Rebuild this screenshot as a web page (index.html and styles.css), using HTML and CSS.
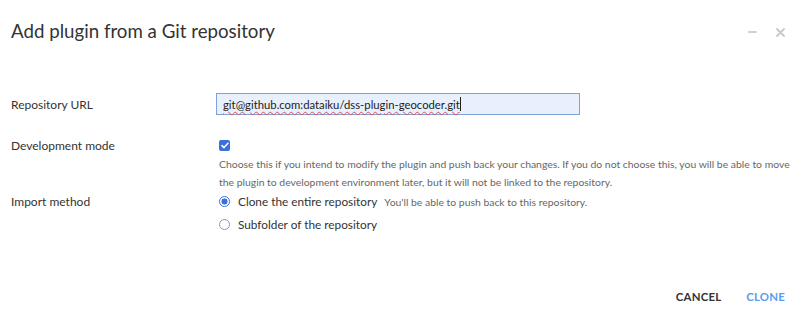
FILE: index.html
```html
<!DOCTYPE html>
<html>
<head>
<meta charset="utf-8">
<link rel="stylesheet" href="styles.css">
</head>
<body>
<div class="modal">
  <div class="header">
    <h1 class="title">Add plugin from a Git repository</h1>
    <div class="controls">
      <span class="ctl-min"></span>
      <svg class="ctl-close" width="9" height="9" viewBox="0 0 9 9"><path d="M1 1L8 8M8 1L1 8" stroke="#c8c8c8" stroke-width="1.8" stroke-linecap="round"/></svg>
    </div>
  </div>
  <div class="form">
    <div class="row row-url">
      <div class="label">Repository URL</div>
      <div class="field">
        <div class="input"><span class="spell">git@github.com:dataiku/dss-plugin-geocoder.git</span><span class="caret"></span></div>
      </div>
    </div>
    <div class="row row-dev">
      <div class="label">Development mode</div>
      <div class="field inset">
        <span class="checkbox"><svg width="8" height="7" viewBox="0 0 8 7"><path d="M1 3.6L3 5.6L7 1.2" stroke="#fff" stroke-width="1.5" fill="none" stroke-linecap="round" stroke-linejoin="round"/></svg></span>
        <p class="help">Choose this if you intend to modify the plugin and push back your changes. If you do not choose this, you will be able to move the plugin to development environment later, but it will not be linked to the repository.</p>
      </div>
    </div>
    <div class="row row-import">
      <div class="label">Import method</div>
      <div class="field inset">
        <div class="radio-line"><span class="radio checked"></span><span class="radio-text">Clone the entire repository</span><span class="radio-help">You'll be able to push back to this repository.</span></div>
        <div class="radio-line"><span class="radio"></span><span class="radio-text">Subfolder of the repository</span></div>
      </div>
    </div>
  </div>
  <div class="footer">
    <button class="btn btn-cancel">CANCEL</button>
    <button class="btn btn-clone">CLONE</button>
  </div>
</div>
</body>
</html>
```

FILE: styles.css
```css
html, body {
  margin: 0;
  padding: 0;
  background: #fff;
}
body {
  font-family: "Lato", "Noto Sans", sans-serif;
  color: #333;
}
.modal {
  width: 800px;
  height: 314px;
  display: flex;
  flex-direction: column;
}
.header {
  display: flex;
  justify-content: space-between;
  align-items: center;
  height: 64px;
  padding: 0 15px 0 11px;
}
.title {
  margin: 0;
  font-size: 18.7px;
  font-weight: 400;
  color: #333;
  position: relative;
  top: -1px;
}
.controls {
  display: flex;
  align-items: center;
  gap: 19px;
}
.ctl-min {
  display: block;
  width: 9px;
  height: 2px;
  background: #d0d0d0;
  border-radius: 1px;
}
.form {
  padding: 29px 0 0 11px;
}
.row {
  display: grid;
  grid-template-columns: 205px 1fr;
  font-size: 12px;
}
.label {
  color: #333;
}
.inset {
  padding-left: 3px;
}
.row-url {
  align-items: center;
  height: 22px;
}
.input {
  width: 356px;
  height: 20px;
  border: 1px solid #7fa2d8;
  background: #e8f0fd;
  padding: 0 0 0 6px;
  display: flex;
  align-items: center;
  font-size: 11.3px;
  color: #222;
}
.spell {
  text-decoration: underline wavy #e05252;
  text-decoration-thickness: 1px;
  text-underline-offset: 2px;
}
.caret {
  display: inline-block;
  width: 1px;
  height: 14px;
  background: #222;
}
.row-dev {
  margin-top: 23px;
}
.checkbox {
  display: flex;
  align-items: center;
  justify-content: center;
  width: 11px;
  height: 11px;
  background: #3b6fdc;
  border-radius: 2px;
  margin-top: 2px;
}
.help {
  margin: 4px 0 0 0;
  font-size: 10.4px;
  line-height: 18px;
  color: #666;
  width: 575px;
}
.row-import {
  margin-top: -1px;
}
.row-import .label {
  line-height: 23px;
}
.radio-line {
  display: flex;
  align-items: center;
  height: 23px;
}
.radio {
  display: inline-block;
  width: 11px;
  height: 11px;
  border: 1px solid #999;
  border-radius: 50%;
  box-sizing: border-box;
  margin-right: 8px;
}
.radio.checked {
  border: 1px solid #3b6fdc;
  background: radial-gradient(circle, #3b6fdc 0 2.8px, #fff 3.3px);
}
.radio-text {
  font-size: 11.8px;
  color: #333;
}
.radio-help {
  font-size: 10.4px;
  color: #666;
  margin-left: 7px;
}
.footer {
  margin-top: auto;
  display: flex;
  justify-content: flex-end;
  gap: 25px;
  padding: 0 15px 11px 0;
}
.btn {
  border: none;
  background: none;
  padding: 0;
  font-family: inherit;
  font-size: 11.4px;
  font-weight: 700;
  letter-spacing: 0.2px;
}
.btn-cancel {
  color: #333;
}
.btn-clone {
  color: #5a9cf0;
}
```
